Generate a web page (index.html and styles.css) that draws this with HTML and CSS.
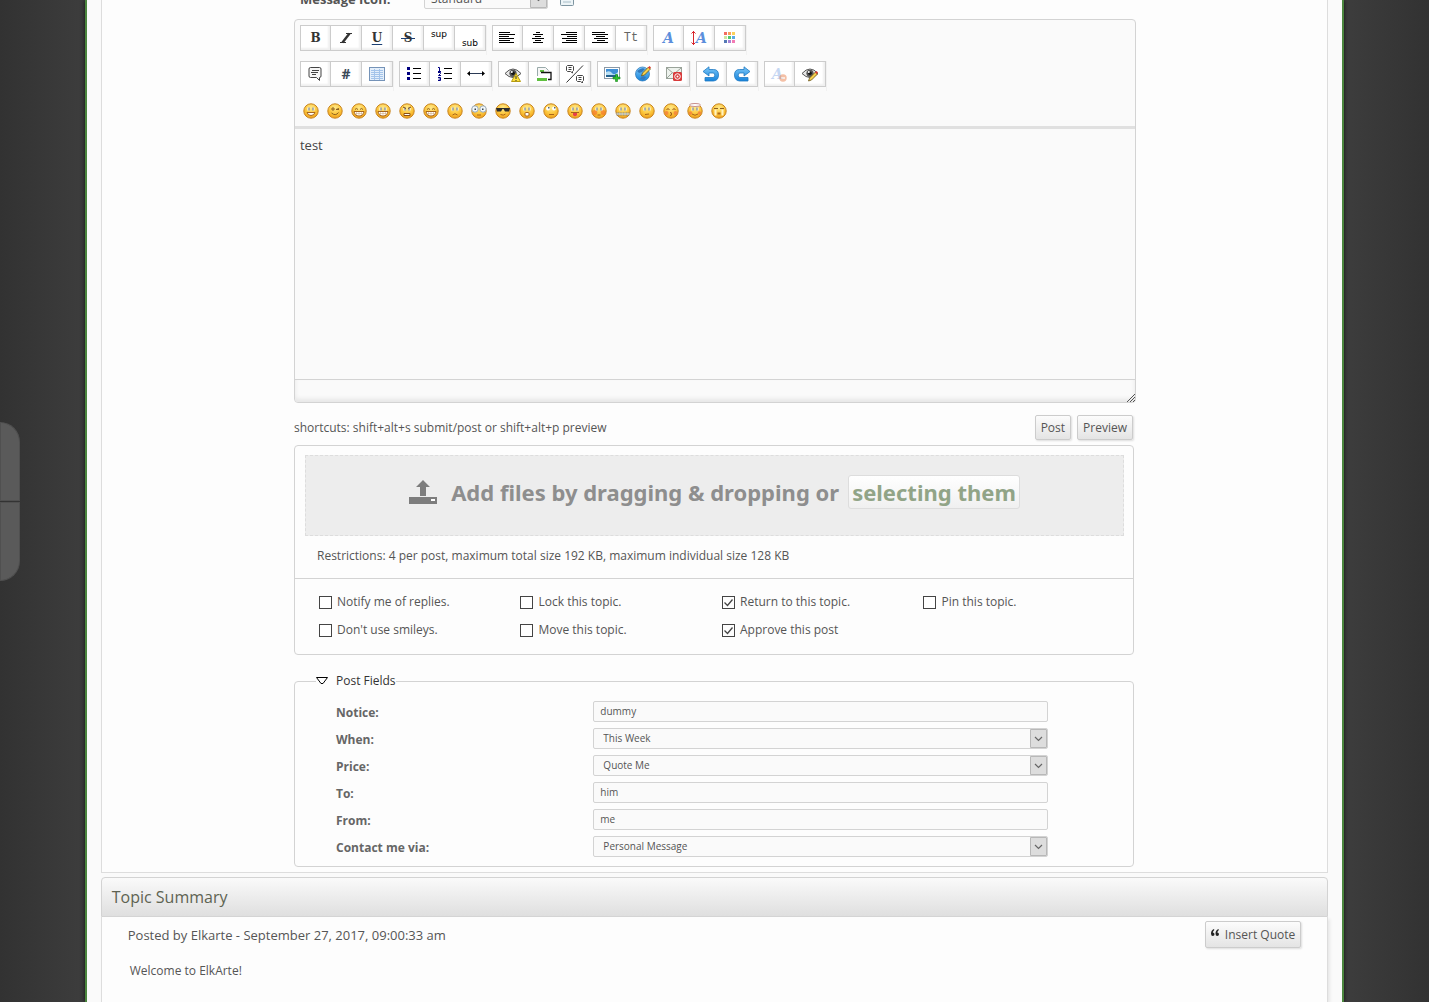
FILE: index.html
```html
<!DOCTYPE html>
<html lang="en">
<head>
<meta charset="utf-8">
<title>Post reply</title>
<link rel="stylesheet" href="styles.css">
</head>
<body>
<svg class="sprite" aria-hidden="true">
  <defs>
    <radialGradient id="skin" cx="50%" cy="28%" r="70%"><stop offset="0" stop-color="#ffe98a"/><stop offset=".6" stop-color="#fcc63c"/><stop offset="1" stop-color="#f0a01c"/></radialGradient>
    <linearGradient id="blue" x1="0" y1="0" x2="0" y2="1"><stop offset="0" stop-color="#7cc8f8"/><stop offset="1" stop-color="#1583dc"/></linearGradient>
    <symbol id="face" viewBox="0 0 16 16"><circle cx="8" cy="8" r="7.2" fill="url(#skin)" stroke="#c9851f"/></symbol>
    <symbol id="eyes" viewBox="0 0 16 16"><path d="M4.5 4.5h2v3h-2zM9.5 4.5h2v3h-2z" fill="#fff"/><path d="M5.5 4.5h1v3h-1zM9.5 4.5h1v3h-1z" fill="#5a6a78"/></symbol>
    <symbol id="grin" viewBox="0 0 16 16"><path d="M3 8.5h10q-.5 4.5-5 4.5t-5-4.5z" fill="#fff" stroke="#a8651a"/><path d="M5.5 9v3M8 9v4M10.5 9v3M3.5 10.5h9" stroke="#c9a070" stroke-width=".5"/></symbol>
    <symbol id="pencil" viewBox="0 0 16 16"><path d="M6.500 15l1-3 6-6 2 2-6 6z" fill="#f6d04d" stroke="#6b5518" stroke-width=".8"/><path d="M13 6.500l1.500-1.500 1.500 1.500-1.500 1.500z" fill="#e03a2f"/></symbol>
    <symbol id="eye" viewBox="0 0 16 16"><path d="M0 7.500q8-9 16 0-8 8-16 0z" fill="#e8e8e8" stroke="#555"/><circle cx="8" cy="7.300" r="3.600" fill="#555"/><circle cx="8" cy="7.300" r="1.800" fill="#111"/><circle cx="6.800" cy="6" r="1" fill="#fff"/></symbol>
  </defs>
</svg>

<nav class="side-tabs" aria-label="Quick scroll">
  <button class="side-tab side-tab-up" aria-label="Go up"></button>
  <button class="side-tab side-tab-down" aria-label="Go down"></button>
</nav>

<main class="page">
  <section class="panel">
    <form class="post-form">
      <div class="icon-row">
        <label class="icon-label" for="icon">Message Icon:</label>
        <select class="select icon-select" id="icon"><option>Standard</option></select>
        <svg class="ico" viewBox="0 0 16 16"><rect x="1.500" y="1.500" width="13" height="13" rx="1" fill="#edf4f7" stroke="#7e95a1"/><path d="M4 5h8M4 8h8M4 11h8" stroke="#a9bec8"/></svg>
      </div>

      <div class="editor">
        <div class="toolbar">
          <div class="tool-row">
            <div class="group">
              <button type="button" class="tool t-bold">B</button>
              <button type="button" class="tool" aria-label="Italic"><svg class="ico" viewBox="0 0 16 16"><path d="M8 3.500h6M2 12.500h6" stroke="#333" stroke-width="1.200"/><path d="M11.500 3.500l-7 9" stroke="#333" stroke-width="2.400"/></svg></button>
              <button type="button" class="tool t-underline">U</button>
              <button type="button" class="tool t-strike"><span class="strike">S</span></button>
              <button type="button" class="tool t-sup">sup</button>
              <button type="button" class="tool t-sub">sub</button>
            </div>
            <div class="group">
              <button type="button" class="tool" aria-label="Left"><svg class="ico" viewBox="0 0 16 16"><path class="ln" d="M0 2.500h11M0 4.500h16M0 6.500h10M0 8.500h15M0 10.500h11M0 12.500h15"/></svg></button>
              <button type="button" class="tool" aria-label="Center"><svg class="ico" viewBox="0 0 16 16"><path class="ln" d="M6 2.500h4M3 4.500h10M5 6.500h6M2 8.500h12M5 10.500h6M3 12.500h10"/></svg></button>
              <button type="button" class="tool" aria-label="Right"><svg class="ico" viewBox="0 0 16 16"><path class="ln" d="M5 2.500h11M0 4.500h16M6 6.500h10M1 8.500h15M5 10.500h11M1 12.500h15"/></svg></button>
              <button type="button" class="tool" aria-label="Justify"><svg class="ico" viewBox="0 0 16 16"><path class="ln" d="M0 2.500h13M0 4.500h16M4 6.500h9M2 8.500h14M5 10.500h8M0 12.500h16"/></svg></button>
              <button type="button" class="tool t-tt">Tt</button>
            </div>
            <div class="group">
              <button type="button" class="tool t-font">A</button>
              <button type="button" class="tool t-font"><svg class="ico ico-arrow" viewBox="0 0 5 16"><path d="M2.500 1v14M.5 3.500l2-2 2 2M.5 12.500l2 2 2-2" fill="none" stroke="#d8232a"/></svg>A</button>
              <button type="button" class="tool" aria-label="Colour"><svg class="ico" viewBox="0 0 16 16"><path d="M2 2h3v3H2z" fill="#f36c60"/><path d="M6 2h3v3H6z" fill="#f9a05c"/><path d="M10 2h3v3h-3z" fill="#fbd15b"/><path d="M2 6h3v3H2z" fill="#cde6a0"/><path d="M6 6h3v3H6z" fill="#4fc96e"/><path d="M10 6h3v3h-3z" fill="#5aa9e6"/><path d="M2 10h3v3H2z" fill="#5579b5"/><path d="M6 10h3v3H6z" fill="#a784d6"/><path d="M10 10h3v3h-3z" fill="#f37bb4"/></svg></button>
            </div>
          </div>
          <div class="tool-row">
            <div class="group">
              <button type="button" class="tool" aria-label="Quote"><svg class="ico" viewBox="0 0 16 16"><path d="M3.500 1.500h9q1.500 0 1.500 1.500v7q0 1.500-1.500 1.500h0v3l-3-3h-6Q2 11.500 2 10V3q0-1.500 1.500-1.500z" fill="#f6f6f6" stroke="#444"/><path d="M5 4.500h7M4 6.500h7M5 8.500h4" stroke="#444"/></svg></button>
              <button type="button" class="tool t-code">#</button>
              <button type="button" class="tool" aria-label="Table"><svg class="ico" viewBox="0 0 16 16"><rect x=".5" y="1.500" width="15" height="13" fill="#e4effb" stroke="#7593b8"/><path d="M2 4.500h12M2 6.500h12M2 8.500h12M2 10.500h12M2 12.500h12M5.500 3v11M10.500 3v11" stroke="#a4c4ea"/></svg></button>
            </div>
            <div class="group">
              <button type="button" class="tool" aria-label="List"><svg class="ico" viewBox="0 0 16 16"><path d="M1 1h3v3H1zM1 6h3v3H1zM1 11h3v3H1z" fill="#000080"/><path class="ln" d="M7 2.500h8M7 7.500h8M7 12.500h8"/></svg></button>
              <button type="button" class="tool" aria-label="Ordered list"><svg class="ico" viewBox="0 0 16 16"><path d="M1 1.500h1.500V5M1 5.500h3M1 6.500h2.500v1l-2 2h2.500M1 11.500h2.500v3H1M1.500 13h2" fill="none" stroke="#000080"/><path class="ln" d="M7 2.500h8M7 7.500h8M7 12.500h8"/></svg></button>
              <button type="button" class="tool" aria-label="Rule"><svg class="ico ico-wide" viewBox="0 0 18 16"><path d="M1 7.500h16" stroke="#2b3a55"/><path d="M0 7.500l3-2.500v5zM18 7.500l-3-2.500v5z" fill="#000"/></svg></button>
            </div>
            <div class="group">
              <button type="button" class="tool" aria-label="Spoiler"><svg class="ico" viewBox="0 0 16 16"><use href="#eye"/><path d="M11 7.500l4.500 8h-9z" fill="#ffe23a" stroke="#b59a10"/><path d="M11 10v3M11 14v1" stroke="#333"/></svg></button>
              <button type="button" class="tool" aria-label="Footnote"><svg class="ico" viewBox="0 0 16 16"><path d="M1.500 10V1.500h8l3 3" fill="#f7f7f7" stroke="#9aa"/><path d="M1 12h10v3H1z" fill="#5fbf3f"/><path d="M4 4h4v2H4z" fill="#5fbf3f"/><path d="M5 6.500h10v7h-3" fill="none" stroke="#111" stroke-width="1.300"/></svg></button>
              <button type="button" class="tool" aria-label="Split quote"><svg class="ico ico-wide ico-tall" viewBox="0 0 18 18"><path d="M17 .5L.5 17.500" stroke="#333"/><path d="M1.500 .5h5l1 1v4l-1 1v1.500l-2-1.500h-3l-1-1v-4zM11.500 10.500h5l1 1v4l-1 1v1.500l-2-1.500h-3l-1-1v-4zM2.500 2.500h3M2.500 4.500h3M12.500 12.500h3M12.500 14.500h3" fill="none" stroke="#444"/></svg></button>
            </div>
            <div class="group">
              <button type="button" class="tool" aria-label="Image"><svg class="ico ico-wide" viewBox="0 0 18 16"><rect x="1.500" y="1.500" width="15" height="11" fill="#fff" stroke="#8a98a5"/><path d="M3 3h12v8H3z" fill="#3f8fd6"/><path d="M3 6q4-2 6 1t6-1v3H3z" fill="#b9e0f5"/><path d="M3 9h12v2H3z" fill="#23618d"/><path d="M12.500 8.500h2v2.500H17v2h-2.500V15.500h-2V13H10v-2h2.500z" fill="#2fc12f" stroke="#16831a" stroke-width=".6"/></svg></button>
              <button type="button" class="tool" aria-label="Link"><svg class="ico" viewBox="0 0 16 16"><circle cx="7.500" cy="8" r="7" fill="url(#blue)" stroke="#2672b5" stroke-width=".7"/><path d="M2 5q5-4 8-2l-3 3-3 1zM5 13q2-4 6-2l-2 3z" fill="#3379bd"/><g transform="translate(0 -5)"><use href="#pencil"/></g></svg></button>
              <button type="button" class="tool" aria-label="Email"><svg class="ico" viewBox="0 0 16 16"><rect x=".5" y="1.500" width="15" height="11" fill="#eef3ee" stroke="#9aa39a"/><path d="M1 2l7 6 7-6M1 12l5-5" fill="none" stroke="#9aa39a"/><rect x="7" y="6" width="9" height="9" rx="1.500" fill="#d83a3a"/><circle cx="11.500" cy="10.500" r="2.800" fill="none" stroke="#fff"/><circle cx="11.500" cy="10.500" r="1" fill="#fff"/></svg></button>
            </div>
            <div class="group">
              <button type="button" class="tool" aria-label="Undo"><svg class="ico" viewBox="0 0 16 16"><path d="M0 5.500L6 .8V3.500h4.500q5 0 5 5.500t-5 6H2v-3.500h8q1.800 0 1.800-2.300T10 7H6v3z" fill="url(#blue)" stroke="#1f78c2" stroke-width=".8"/></svg></button>
              <button type="button" class="tool" aria-label="Redo"><svg class="ico" viewBox="0 0 16 16"><path d="M16 5.500L10 .8V3.500H5.500q-5 0-5 5.500t5 6H14v-3.500H6q-1.800 0-1.800-2.300T6 7h4v3z" fill="url(#blue)" stroke="#1f78c2" stroke-width=".8"/></svg></button>
            </div>
            <div class="group">
              <button type="button" class="tool t-font t-off" disabled>A<svg class="ico ico-dot" viewBox="0 0 8 8"><circle cx="4" cy="4" r="3.700" fill="#e8743b"/><path d="M2 4h4" stroke="#fff" stroke-width="1.300"/></svg></button>
              <button type="button" class="tool" aria-label="View source"><svg class="ico" viewBox="0 0 16 16"><use href="#eye"/><use href="#pencil"/></svg></button>
            </div>
          </div>
          <div class="smileys">
            <svg class="ico"><use href="#face"/><use href="#eyes"/><path d="M4 9.500h8q-1 3-4 3t-4-3z" fill="#fff" stroke="#a8651a"/></svg>
            <svg class="ico"><use href="#face"/><path d="M5 5h2v2H5zM9 6.500l3-1M9 6.500h3M4.500 10q4 3.500 7-.5" fill="none" stroke="#8d6020"/></svg>
            <svg class="ico"><use href="#face"/><path d="M4 6.500q1.300-2 3 0M9 6.500q1.300-2 3 0" fill="none" stroke="#8d6020"/><use href="#grin"/></svg>
            <svg class="ico"><use href="#face"/><use href="#eyes"/><use href="#grin"/></svg>
            <svg class="ico"><use href="#face"/><use href="#eyes"/><path d="M4 4l3 1.500M12 4L9 5.500" stroke="#7b4a12"/><path d="M5 12.500v-2h6v2z" fill="#fff" stroke="#8b5015"/></svg>
            <svg class="ico"><use href="#face"/><path d="M4 6.500q1.300-2 3 0M9 6.500q1.300-2 3 0" fill="none" stroke="#8d6020"/><use href="#grin"/></svg>
            <svg class="ico"><use href="#face"/><use href="#eyes"/><path d="M5.500 12q2.500-2.500 5 0" fill="none" stroke="#a8651a"/></svg>
            <svg class="ico"><use href="#face"/><circle cx="4" cy="6" r="3.200" fill="#f2f7f9" stroke="#9ab"/><circle cx="12" cy="6" r="3.200" fill="#f2f7f9" stroke="#9ab"/><path d="M3.500 5.500H5V7H3.500zM11 5.500h1.500V7H11z" fill="#345"/><path d="M6 12h4" stroke="#a8651a"/></svg>
            <svg class="ico"><use href="#face"/><path d="M1 5h14l-1 3.500h-4L8.500 6h-1L6 8.500H2z" fill="#2c2c2c"/><path d="M5.500 11.500q3 1.500 5-.5" fill="none" stroke="#a8651a"/></svg>
            <svg class="ico"><use href="#face"/><use href="#eyes"/><rect x="6" y="9.500" width="4" height="3.500" rx="1" fill="#fff" stroke="#a8651a"/></svg>
            <svg class="ico"><use href="#face"/><circle cx="5" cy="5.500" r="2" fill="#fff"/><circle cx="11" cy="5.500" r="2" fill="#fff"/><path d="M5 4h1.500v1.500H5zM11 4h1.500v1.500H11z" fill="#567"/><path d="M6 11.500h5" stroke="#a8651a"/></svg>
            <svg class="ico"><use href="#face"/><use href="#eyes"/><path d="M4 9.500h8" stroke="#a8651a"/><path d="M6 10h4v2q-2 2.500-4 0z" fill="#e8404a"/></svg>
            <svg class="ico"><use href="#face"/><circle cx="3.800" cy="9.500" r="2.500" fill="#f46a2c" opacity=".6"/><circle cx="12.200" cy="9.500" r="2.500" fill="#f46a2c" opacity=".6"/><use href="#eyes"/><path d="M6.500 12h3" stroke="#a8651a"/></svg>
            <svg class="ico"><use href="#face"/><use href="#eyes"/><path d="M1.500 11h13" stroke="#6f7f8c" stroke-width="3" stroke-dasharray="1 .6"/><path d="M1.500 11h13" stroke="#e8edf0"/></svg>
            <svg class="ico"><use href="#face"/><use href="#eyes"/><path d="M6 11.500l4-.5" stroke="#a8651a"/></svg>
            <svg class="ico"><use href="#face"/><circle cx="3.500" cy="10" r="2" fill="#f4803c" opacity=".8"/><circle cx="12.500" cy="10" r="2" fill="#f4803c" opacity=".8"/><path d="M3.500 6.500q1.500-1.500 3 0M9.500 6.500q1.500-1.500 3 0M7 9.500q3 .5 1 1.500 2 .8-1 1.500" fill="none" stroke="#93541a"/></svg>
            <svg class="ico"><use href="#face"/><use href="#eyes"/><circle cx="3.500" cy="10" r="1.700" fill="#f4803c" opacity=".8"/><circle cx="12.500" cy="10" r="1.700" fill="#f4803c" opacity=".8"/><path d="M5 11q3 2.500 6 0" fill="none" stroke="#a8651a"/><ellipse cx="8" cy="2" rx="5.500" ry="1.500" fill="#fff" stroke="#c79090"/></svg>
            <svg class="ico"><use href="#face"/><path d="M3 5.500h4M9 5.500h4" stroke="#8d6020"/><path d="M3.500 6.500h2v6h-2zM10.500 6.500h2v6h-2z" fill="#fff3c4"/><path d="M6.500 9.500h3v2h-3z" fill="#b06a1c"/></svg>
          </div>
        </div>
        <textarea class="message" aria-label="Message">test</textarea>
        <div class="editor-foot"><svg class="grip" viewBox="0 0 9 9"><path d="M1 9L9 1M4 9l5-5M7 9l2-2" stroke="#555"/></svg></div>
      </div>

      <div class="submit-row">
        <span>shortcuts: shift+alt+s submit/post or shift+alt+p preview</span>
        <div class="submit-buttons">
          <button type="button" class="btn">Post</button>
          <button type="button" class="btn">Preview</button>
        </div>
      </div>

      <div class="options">
        <div class="drop">
          <svg class="upload" viewBox="0 0 28 26"><path d="M14 1l7 7h-4v9h-6V8H7z" fill="#7d7d7d"/><path d="M0 18h28v7H0z" fill="#7d7d7d"/><path d="M22 20h4v2h-4z" fill="#fff"/></svg>
          <span>Add files by dragging &amp; dropping or</span>
          <a class="pick" href="#">selecting them</a>
        </div>
        <p class="restrictions">Restrictions: 4 per post, maximum total size 192 KB, maximum individual size 128 KB</p>
        <div class="checks">
          <label class="check"><input type="checkbox">Notify me of replies.</label>
          <label class="check"><input type="checkbox">Lock this topic.</label>
          <label class="check"><input type="checkbox" checked>Return to this topic.</label>
          <label class="check"><input type="checkbox">Pin this topic.</label>
          <label class="check"><input type="checkbox">Don't use smileys.</label>
          <label class="check"><input type="checkbox">Move this topic.</label>
          <label class="check"><input type="checkbox" checked>Approve this post</label>
        </div>
      </div>

      <fieldset class="fields">
        <legend class="legend"><svg class="triangle" viewBox="0 0 12 8"><path d="M.5 .5h11L7 6.500H5z" fill="#fff" stroke="#000"/></svg>Post Fields</legend>
        <div class="field"><label for="f1">Notice:</label><input class="text" id="f1" value="dummy"></div>
        <div class="field"><label for="f2">When:</label><select class="select" id="f2"><option>This Week</option></select></div>
        <div class="field"><label for="f3">Price:</label><select class="select" id="f3"><option>Quote Me</option></select></div>
        <div class="field"><label for="f4">To:</label><input class="text" id="f4" value="him"></div>
        <div class="field"><label for="f5">From:</label><input class="text" id="f5" value="me"></div>
        <div class="field"><label for="f6">Contact me via:</label><select class="select" id="f6"><option>Personal Message</option></select></div>
      </fieldset>
    </form>
  </section>

  <section class="summary">
    <h2 class="summary-title">Topic Summary</h2>
    <article class="summary-body">
      <header class="summary-head">
        <h3 class="poster">Posted by Elkarte - September 27, 2017, 09:00:33 am</h3>
        <button class="btn quote-btn"><svg class="quote" viewBox="0 0 8 7"><path d="M3 0Q0 1 0 4.500 0 7 1.800 7 3.500 7 3.500 5.300 3.500 3.800 1.800 3.600 2 2 3.300 1zM7.500 0Q4.500 1 4.500 4.500 4.500 7 6.300 7 8 7 8 5.300 8 3.800 6.300 3.600 6.500 2 7.800 1z" fill="#222"/></svg>Insert Quote</button>
      </header>
      <p class="reply">Welcome to ElkArte!</p>
    </article>
  </section>
</main>
</body>
</html>
```
FILE: styles.css
```css
* { box-sizing: border-box; }

body {
  margin: 0;
  height: 100vh;
  overflow: hidden;
  display: flex;
  justify-content: center;
  background: linear-gradient(to right, #323232, #3d3d3d 6%, #3d3d3d 94%, #323232);
  color: #555;
  font-family: "Open Sans", "Noto Sans", sans-serif;
  font-size: 12px;
  line-height: 18px;
}

button, input, select, textarea { font-family: inherit; color: inherit; margin: 0; }
h2, h3, p { margin: 0; font-weight: normal; }
.sprite { position: absolute; width: 0; height: 0; }

.side-tabs {
  position: fixed;
  left: 0;
  top: 422px;
  display: flex;
  flex-direction: column;
  gap: 1px;
}
.side-tab { width: 20px; height: 79px; padding: 0; border: 1px solid #505050; background: #5a5a5a; }
.side-tab-up { border-radius: 0 20px 0 0; }
.side-tab-down { border-radius: 0 0 20px 0; }

.page {
  width: calc(88% + 2px);
  height: 100%;
  display: flex;
  flex-direction: column;
  padding: 0 14px;
  border: solid #4b863e;
  border-width: 0 2px;
  background: #fafafa;
  box-shadow: 0 0 4px #111;
}
.panel {
  padding-bottom: 5px;
  border: 1px solid #ddd;
  border-top: 0;
  background: #fdfdfd;
}
.post-form { max-width: 843px; margin: 0 auto; padding-left: 1px; }

.icon-row { display: flex; align-items: center; height: 21px; margin-top: -12px; padding-left: 6px; }
.icon-label { width: 124px; font-size: 13px; font-weight: bold; }
.icon-select { width: 124px; margin-right: 11px; }
.ico { width: 16px; height: 16px; flex: none; display: block; }
.ico-wide { width: 18px; }
.ico-tall { height: 18px; }
.ico-arrow { width: 5px; }
.ln { stroke: #000; shape-rendering: crispEdges; }

.editor {
  margin-top: 10px;
  border: 1px solid #d3d3d3;
  border-radius: 4px;
  background: #fafafa;
}
.toolbar { padding: 5px 5px 7px; border-bottom: 3px solid #e0e0e0; }
.tool-row { display: flex; gap: 5px; margin-bottom: 6px; }
.group {
  display: flex;
  padding-bottom: 4px;
  border-right: 1px solid #f1f1f1;
}
.tool {
  display: flex;
  align-items: center;
  justify-content: center;
  width: 31px;
  height: 26px;
  padding: 0;
  border: 1px solid #ccc;
  border-left-width: 0;
  background: #fff;
  box-shadow: inset -2px -2px 2px #f0f0f0;
  color: #333;
  font-size: 12px;
  line-height: 14px;
}
.tool:first-child { border-left-width: 1px; }
.t-bold, .t-underline, .t-strike { font-family: "DejaVu Serif", serif; font-weight: bold; font-size: 12px; }
.t-underline { text-decoration: underline #1b3f73; text-underline-offset: 2px; }
.strike { padding: 0 3px; background: linear-gradient(#1b3f73, #1b3f73) center / 100% 1px no-repeat; }
.t-sup, .t-sub { font-family: "DejaVu Sans", sans-serif; font-size: 9px; color: #000; }
.t-sup { padding-bottom: 8px; }
.t-sub { padding-top: 10px; }
.t-tt { font-family: "Liberation Mono", monospace; color: #666; }
.t-font { font-family: "DejaVu Serif", serif; font-style: italic; font-weight: bold; font-size: 14px; color: #5b8fdc; }
.t-off { color: #c5d7f3; }
.t-code { font-weight: bold; font-size: 14px; color: #3c4a5a; }
.ico-dot { width: 8px; height: 8px; align-self: flex-end; margin: 0 0 4px -4px; opacity: .45; }
.smileys { display: flex; gap: 8px; padding: 6px 3px 0; }

.message {
  display: block;
  width: 100%;
  height: 250px;
  padding: 7px 5px;
  border: 0;
  outline: 0;
  resize: none;
  background: #fafafa;
  color: #444;
  font-size: 13px;
  line-height: 18px;
}
.editor-foot {
  display: flex;
  align-items: flex-end;
  justify-content: flex-end;
  height: 23px;
  border-top: 1px solid #d3d3d3;
  border-radius: 0 0 4px 4px;
  box-shadow: inset 0 -3px 4px #e6e6e6;
}
.grip { width: 9px; height: 9px; }

.submit-row { display: flex; align-items: center; justify-content: space-between; margin-top: 12px; padding-right: 3px; }
.submit-buttons { display: flex; gap: 6px; }
.btn {
  height: 25px;
  padding: 0 5px;
  border: 1px solid #ccc;
  border-radius: 2px;
  background: linear-gradient(#fcfcfc, #e4e4e4);
  box-shadow: 1px 1px 2px #ddd;
  font-size: 12px;
  line-height: 18px;
}

.options { margin: 5px 2px 0 0; border: 1px solid #d3d3d3; border-radius: 4px; }
.drop {
  display: flex;
  align-items: center;
  justify-content: center;
  height: 81px;
  margin: 9px 9px 0 10px;
  padding-bottom: 8px;
  border: 1px dashed #ddd;
  background: #ededed;
  color: #8e8e8e;
  font-family: "Noto Sans", "Open Sans", sans-serif;
  font-size: 22px;
  font-weight: bold;
  line-height: 32px;
}
.upload { width: 28px; height: 26px; margin-right: 14px; }
.pick {
  margin-left: 9px;
  padding: 0 3px;
  border: 1px solid #ddd;
  border-radius: 3px;
  background: linear-gradient(#fff, #f0f0f0);
  color: #91a487;
  text-decoration: none;
}
.restrictions { padding: 11px 22px 13px; border-bottom: 1px solid #d3d3d3; }
.checks { display: grid; grid-template-columns: repeat(4, 1fr); row-gap: 10px; padding: 14px 8px 15px 24px; }
.check { display: flex; align-items: center; gap: 5px; }
.check input {
  appearance: none;
  width: 13px;
  height: 13px;
  border: 1px solid #444;
  background: #fff;
}
.check input:checked {
  background: url("data:image/svg+xml,%3Csvg xmlns='http://www.w3.org/2000/svg' width='11' height='11'%3E%3Cpath d='M1.500 5.500l3 3 5-6' fill='none' stroke='%23444' stroke-width='1.300'/%3E%3C/svg%3E") no-repeat;
}

.fields { margin: 17px 2px 0 0; padding: 10px 40px 10px 41px; border: 1px solid #d3d3d3; border-radius: 4px; }
.legend { display: flex; align-items: center; gap: 8px; margin-left: -20px; padding: 0; color: #333; font-size: 12px; }
.triangle { width: 12px; height: 8px; }
.field { display: grid; grid-template-columns: 34% 60%; align-items: center; height: 21px; margin-bottom: 6px; }
.field:last-child { margin-bottom: 0; }
.field label { padding-top: 4px; font-size: 12px; font-weight: bold; color: #666; }
.text, .select {
  height: 21px;
  padding: 0 6px;
  border: 1px solid #d3d3d3;
  border-radius: 2px;
  background: #fafafa;
  font-size: 10px;
  line-height: 14px;
}
.select {
  appearance: none;
  padding-left: 9px;
  background: #fafafa url("data:image/svg+xml,%3Csvg xmlns='http://www.w3.org/2000/svg' width='17' height='19'%3E%3Cpath d='M.5 .5h16v18H.5z' fill='%23ddd' stroke='%23b8b8b8'/%3E%3Cpath d='M5 8l3.500 3.500L12 8' fill='none' stroke='%23666' stroke-width='1.200'/%3E%3C/svg%3E") right center no-repeat;
}
.icon-select { padding-left: 6px; font-size: 12px; }

.summary { flex: 1; display: flex; flex-direction: column; margin-top: 4px; }
.summary-title {
  height: 40px;
  padding: 0 10px;
  border: 1px solid #d3d3d3;
  border-radius: 4px 4px 0 0;
  background: linear-gradient(#fafafa, #dfdfdf);
  color: #5e6352;
  font-size: 16px;
  line-height: 38px;
}
.summary-body { flex: 1; padding: 4px 26px; border: solid #ddd; border-width: 0 1px; background: #fdfdfd; box-shadow: 2px 2px 3px #e8e8e8; }
.summary-head { display: flex; align-items: center; justify-content: space-between; }
.poster { font-size: 13px; }
.quote-btn { display: flex; align-items: center; height: 27px; }
.quote { width: 8px; height: 7px; margin: 0 6px 4px 0; }
.reply { padding: 14px 2px; }
```
